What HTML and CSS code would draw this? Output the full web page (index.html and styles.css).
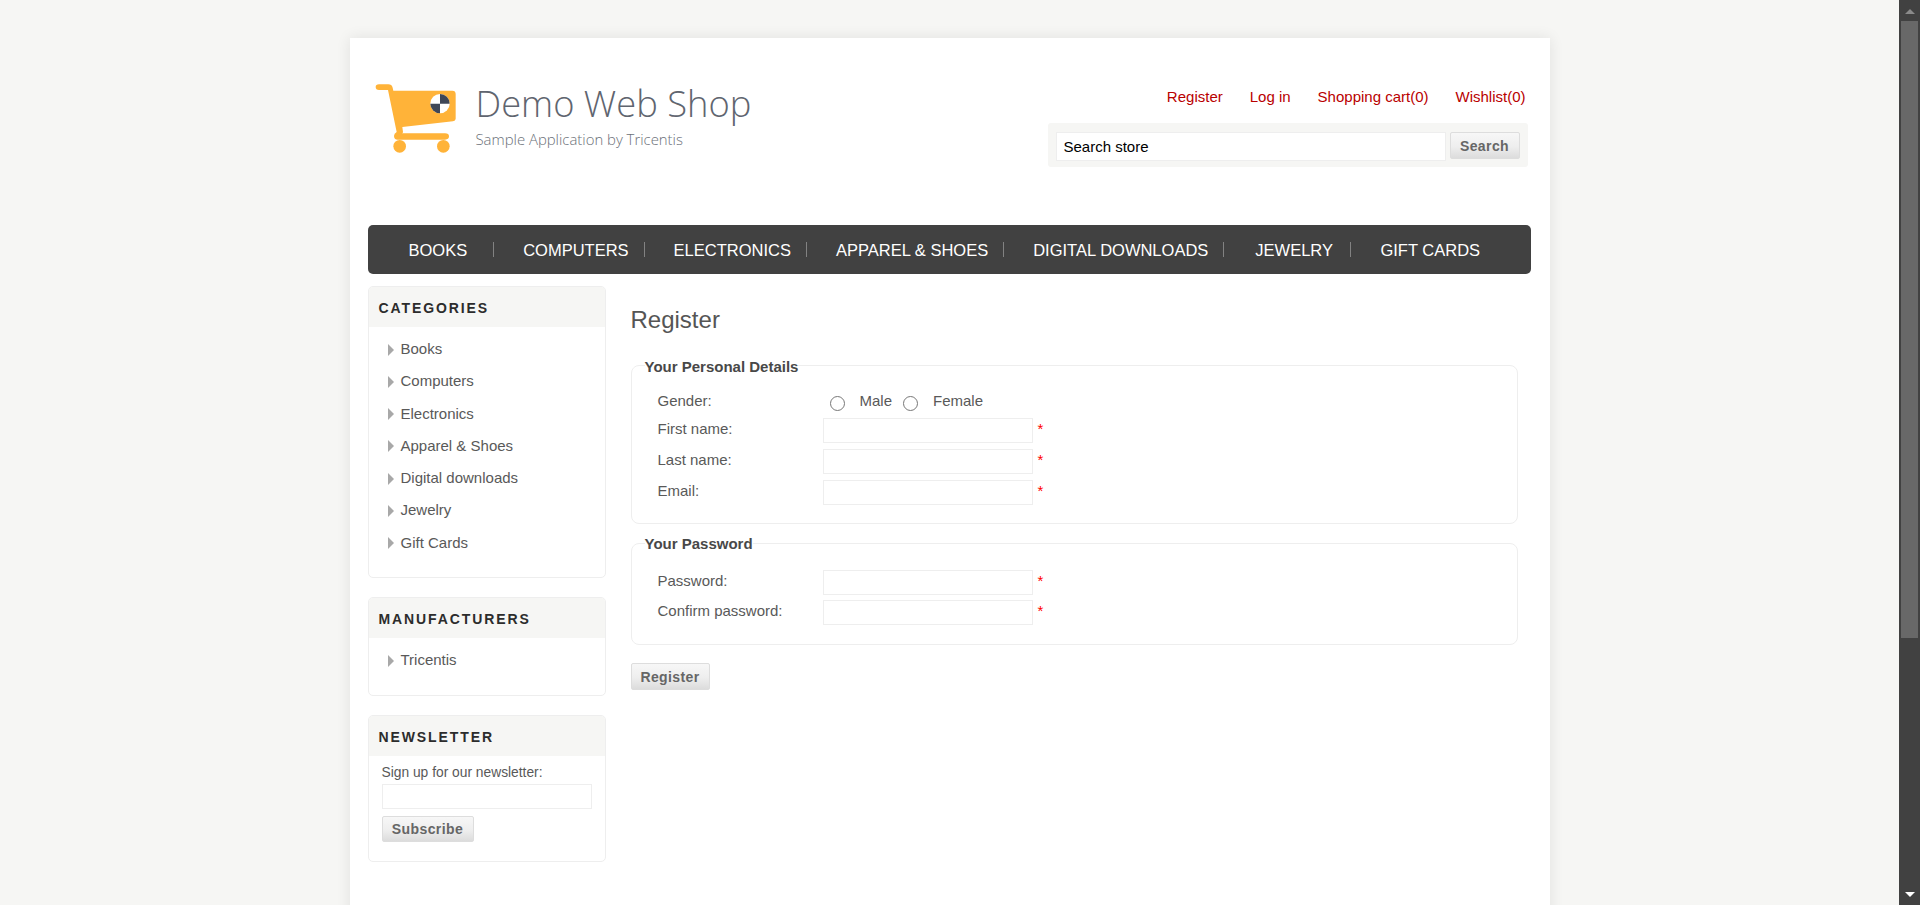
FILE: index.html
```html
<!DOCTYPE html>
<html lang="en">
<head>
<meta charset="utf-8">
<title>Demo Web Shop. Register</title>
<link rel="stylesheet" href="styles.css">
</head>
<body>
<div class="viewport">
  <div class="page">
    <div class="wrapper">
      <header class="header">
        <a class="logo" href="#">
          <svg class="logo-cart" viewBox="0 0 330 270" width="110" height="90" aria-hidden="true">
            <path class="cart-fill" d="M42 43H70Q80 43 83 53L85 62H262Q272 62 272 72V146Q272 153 264 154L112 171L114 186Q114 190 110 190H240Q252 190 252 199Q252 209 240 209H98Q87 209 87 198Q87 190 95 186L69 60H42Q32 60 32 51Q32 43 42 43Z"/>
            <circle class="cart-fill" cx="104" cy="229" r="19"/>
            <circle class="cart-fill" cx="235" cy="229" r="19"/>
            <circle cx="225" cy="101" r="29" fill="#fff"/>
            <path class="cart-dark" d="M225 72A29 29 0 0 1 254 101H225Z"/>
            <path class="cart-dark" d="M225 130A29 29 0 0 1 196 101H225Z"/>
          </svg>
          <span class="logo-text">
            <span class="logo-title">Demo Web Shop</span>
            <span class="logo-sub">Sample Application by Tricentis</span>
          </span>
        </a>
        <div class="header-right">
          <ul class="header-links">
            <li><a href="#">Register</a></li>
            <li><a href="#">Log in</a></li>
            <li><a href="#">Shopping cart(0)</a></li>
            <li><a href="#">Wishlist(0)</a></li>
          </ul>
          <form class="search">
            <input class="search-input" type="text" value="Search store">
            <button class="btn search-btn" type="button">Search</button>
          </form>
        </div>
      </header>

      <nav class="menu">
        <ul class="menu-list">
          <li class="menu-item m-books"><a href="#">BOOKS</a></li>
          <li class="menu-item"><a href="#">COMPUTERS</a></li>
          <li class="menu-item"><a href="#">ELECTRONICS</a></li>
          <li class="menu-item"><a href="#">APPAREL &amp; SHOES</a></li>
          <li class="menu-item"><a href="#">DIGITAL DOWNLOADS</a></li>
          <li class="menu-item m-jewelry"><a href="#">JEWELRY</a></li>
          <li class="menu-item m-last"><a href="#">GIFT CARDS</a></li>
        </ul>
      </nav>

      <div class="columns">
        <aside class="side">
          <section class="block">
            <h3 class="block-title">CATEGORIES</h3>
            <ul class="block-list">
              <li><a href="#">Books</a></li>
              <li><a href="#">Computers</a></li>
              <li><a href="#">Electronics</a></li>
              <li><a href="#">Apparel &amp; Shoes</a></li>
              <li><a href="#">Digital downloads</a></li>
              <li><a href="#">Jewelry</a></li>
              <li><a href="#">Gift Cards</a></li>
            </ul>
          </section>
          <section class="block">
            <h3 class="block-title">MANUFACTURERS</h3>
            <ul class="block-list">
              <li><a href="#">Tricentis</a></li>
            </ul>
          </section>
          <section class="block">
            <h3 class="block-title">NEWSLETTER</h3>
            <div class="news">
              <label class="news-label" for="news-email">Sign up for our newsletter:</label>
              <input class="field news-input" id="news-email" type="text">
              <button class="btn news-btn" type="button">Subscribe</button>
            </div>
          </section>
        </aside>

        <main class="main">
          <h1 class="page-title">Register</h1>
          <form>
            <fieldset class="group">
              <legend class="group-title">Your Personal Details</legend>
              <div class="rows">
                <div class="row row-gender">
                  <span class="row-label">Gender:</span>
                  <input class="radio radio-male" type="radio" name="gender" id="male">
                  <label class="radio-text" for="male">Male</label>
                  <input class="radio radio-female" type="radio" name="gender" id="female">
                  <label class="radio-text" for="female">Female</label>
                </div>
                <div class="row"><label class="row-label">First name:</label><input class="field row-input" type="text"><span class="req">*</span></div>
                <div class="row"><label class="row-label">Last name:</label><input class="field row-input" type="text"><span class="req">*</span></div>
                <div class="row"><label class="row-label">Email:</label><input class="field row-input" type="text"><span class="req">*</span></div>
              </div>
            </fieldset>
            <fieldset class="group group-password">
              <legend class="group-title">Your Password</legend>
              <div class="rows">
                <div class="row"><label class="row-label">Password:</label><input class="field row-input" type="password"><span class="req">*</span></div>
                <div class="row"><label class="row-label">Confirm password:</label><input class="field row-input" type="password"><span class="req">*</span></div>
              </div>
            </fieldset>
            <button class="btn register-btn" type="button">Register</button>
          </form>
        </main>
      </div>
    </div>
  </div>

  <div class="scrollbar" aria-hidden="true">
    <div class="sb-btn"><span class="sb-up"></span></div>
    <div class="sb-track"><div class="sb-thumb"></div></div>
    <div class="sb-btn"><span class="sb-down"></span></div>
  </div>
</div>
</body>
</html>
```

FILE: styles.css
```css
* { box-sizing: border-box; }

html, body { margin: 0; height: 100%; }

body {
  background: #f6f6f4;
  color: #595959;
  font-family: "Liberation Sans", Arial, sans-serif;
  font-size: 15px;
}

a { color: inherit; text-decoration: none; }
ul { list-style: none; margin: 0; padding: 0; }

.viewport { display: flex; height: 905px; overflow: hidden; }
.page { flex: 1; min-width: 0; overflow: hidden; }

.wrapper {
  width: 1200px;
  min-height: 1228px;
  margin: 38px auto 0;
  padding: 0 19px 0 18px;
  background: #fff;
  box-shadow: 0 0 14px rgba(0, 0, 0, .09);
}

/* header */
.header {
  display: flex;
  justify-content: space-between;
  align-items: flex-start;
  padding-right: 3px;
  height: 187px;
}

.logo { display: flex; align-items: flex-start; margin: 32px 0 0 -3px; }
.logo-cart { display: block; }
.cart-fill { fill: #ffb339; }
.cart-dark { fill: #3f4757; }
.logo-text { display: flex; flex-direction: column; margin: 11px 0 0 1px; }
.logo-title {
  font-family: "Open Sans", sans-serif;
  font-weight: 300;
  font-size: 36.3px;
  line-height: 44px;
  color: #5f656f;
  white-space: nowrap;
}
.logo-sub {
  margin: 4px 0 0;
  font-family: "Open Sans", sans-serif;
  font-weight: 300;
  font-size: 14.9px;
  line-height: 20px;
  color: #6b7078;
  white-space: nowrap;
}

.header-right { display: flex; flex-direction: column; align-items: flex-end; padding-top: 49px; }
.header-links { display: flex; gap: 27px; padding-right: 2px; line-height: 20px; color: #b90000; }

.search {
  display: flex;
  align-items: flex-start;
  gap: 4px;
  width: 480px;
  height: 44px;
  margin-top: 16px;
  padding: 9px 8px;
  background: #f6f6f4;
  border-radius: 3px;
}
.search-input {
  width: 390px;
  height: 29px;
  padding: 0 7px;
  border: 1px solid #eee;
  background: #fff;
  color: #000;
  font: 15px "Liberation Sans", Arial, sans-serif;
  outline: none;
}

.btn {
  padding: 0;
  border: 1px solid #ddd;
  border-radius: 2px;
  background: linear-gradient(#f7f7f7 0%, #eee 55%, #dcdcdc 100%);
  color: #666;
  font: bold 14px "Liberation Sans", Arial, sans-serif;
  letter-spacing: .4px;
}
.search-btn { width: 70px; height: 27px; }

/* menu */
.menu {
  height: 49px;
  background: #414141;
  border-radius: 5px;
}
.menu-list { display: flex; align-items: center; height: 100%; padding-left: 12px; }
.menu-item {
  height: 15px;
  padding: 0 15px 0 29px;
  border-right: 1px solid #828282;
  color: #fff;
  font-size: 16.5px;
  line-height: 17px;
  white-space: nowrap;
}
.m-books { padding: 0 26px 0 29px; }
.m-jewelry { padding: 0 17.5px 0 31px; }
.m-last { border-right: 0; }

/* columns */
.columns { display: flex; gap: 25px; margin-top: 12px; }

.side { display: flex; flex-direction: column; gap: 19px; flex: 0 0 238px; }

.block { border: 1px solid #eee; border-radius: 5px; overflow: hidden; }
.block-title {
  height: 39.5px;
  margin: 0;
  padding: 0 10px;
  background: #f6f6f4;
  color: #2c2c2c;
  font-size: 14px;
  font-weight: bold;
  letter-spacing: 1.9px;
  line-height: 42px;
}
.block-list { padding: 6.5px 0 18.5px; }
.block-list li {
  position: relative;
  height: 32.25px;
  padding-left: 32px;
  line-height: 32px;
}
.block-list li::before {
  content: "";
  position: absolute;
  left: 19px;
  top: 10.5px;
  border-style: solid;
  border-width: 6px 0 6px 6px;
  border-color: transparent transparent transparent #a8a8a8;
}

.news { display: flex; flex-direction: column; align-items: flex-start; padding: 7.5px 13px 18.5px; }
.news-label { font-size: 13.8px; line-height: 20px; }
.news-input { width: 210px; height: 25px; margin-top: 1px; }
.news-btn { width: 92px; height: 26px; margin-top: 7px; }

.field { border: 1px solid #eee; background: #fff; outline: none; }

/* main */
.main { flex: 0 0 887px; }
.page-title {
  margin: 19px 0 20px;
  color: #555;
  font-size: 24px;
  font-weight: normal;
  line-height: 30px;
}

.group {
  margin: 0;
  min-width: 0;
  padding: 0 0 18px 26px;
  border: 1px solid #eee;
  border-radius: 8px;
}
.group-password { margin-top: 10px; padding-bottom: 19px; }
.group-title {
  margin-left: -13px;
  padding: 4px 0 0;
  color: #484848;
  font-size: 15px;
  font-weight: bold;
  line-height: 16px;
}
.group-password .group-title { padding-top: 2px; }
.group .rows { padding-top: 13px; }
.group-password .rows { padding-top: 18px; }

.rows { display: flex; flex-direction: column; gap: 6px; }
.group-password .rows { gap: 5px; }

.row { display: flex; align-items: flex-start; height: 25px; line-height: 22px; }
.row-gender { height: 24px; line-height: 25px; }
.row-label { flex: 0 0 165px; }
.row-input { width: 210px; height: 25px; }
.req { margin-left: 5px; color: #f00; line-height: 22px; }

.radio {
  appearance: none;
  flex: none;
  width: 15px;
  height: 15px;
  margin: 8px 0 0;
  border: 1.5px solid #777;
  border-radius: 50%;
  background: #fff;
}
.radio-male { margin-left: 7px; }
.radio-female { margin-left: 11px; }
.radio-text { margin-left: 15px; }

.register-btn { display: block; width: 79px; height: 27px; margin-top: 18px; }

/* window scrollbar */
.scrollbar { flex: 0 0 21px; display: flex; flex-direction: column; background: #414141; }
.sb-btn { flex: 0 0 21px; display: flex; align-items: center; justify-content: center; }
.sb-track { flex: 1; padding: 0 2px; }
.sb-thumb { height: 617px; background: #686868; }
.sb-up, .sb-down { width: 0; height: 0; border-left: 5px solid transparent; border-right: 5px solid transparent; }
.sb-up { margin-top: 2px; border-bottom: 5px solid #8a8a8a; }
.sb-down { margin-bottom: 1px; border-top: 5px solid #fff; }
```
